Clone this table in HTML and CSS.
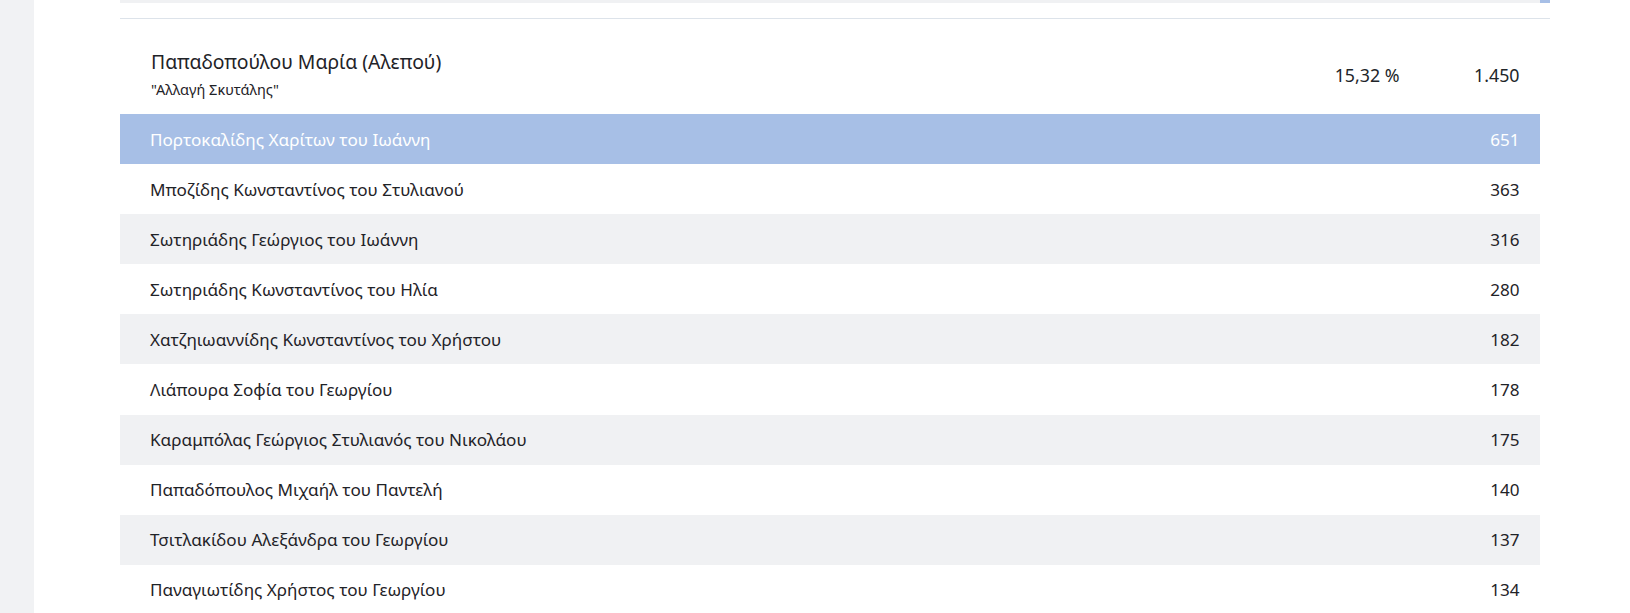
FILE: index.html
```html
<!DOCTYPE html>
<html lang="el">
<head>
<meta charset="utf-8">
<title>Αποτελέσματα</title>
<link rel="stylesheet" href="styles.css">
</head>
<body>
<div class="layout">
  <aside class="sidebar"></aside>
  <main class="main">
    <div class="content">
      <div class="prev-strip"><div class="prev-fill"></div><div class="prev-thumb"></div></div>
      <div class="divider"></div>
      <div class="party">
        <div class="party-head">
          <div class="party-info">
            <div class="party-name">Παπαδοπούλου Μαρία (Αλεπού)</div>
            <div class="party-sub">"Αλλαγή Σκυτάλης"</div>
          </div>
          <div class="party-pct">15,32 %</div>
          <div class="party-votes">1.450</div>
        </div>
        <div class="rows">
          <div class="row row-active"><span class="cand">Πορτοκαλίδης Χαρίτων του Ιωάννη</span><span class="votes">651</span></div>
          <div class="row"><span class="cand">Μποζίδης Κωνσταντίνος του Στυλιανού</span><span class="votes">363</span></div>
          <div class="row row-alt"><span class="cand">Σωτηριάδης Γεώργιος του Ιωάννη</span><span class="votes">316</span></div>
          <div class="row"><span class="cand">Σωτηριάδης Κωνσταντίνος του Ηλία</span><span class="votes">280</span></div>
          <div class="row row-alt"><span class="cand">Χατζηιωαννίδης Κωνσταντίνος του Χρήστου</span><span class="votes">182</span></div>
          <div class="row"><span class="cand">Λιάπουρα Σοφία του Γεωργίου</span><span class="votes">178</span></div>
          <div class="row row-alt"><span class="cand">Καραμπόλας Γεώργιος Στυλιανός του Νικολάου</span><span class="votes">175</span></div>
          <div class="row"><span class="cand">Παπαδόπουλος Μιχαήλ του Παντελή</span><span class="votes">140</span></div>
          <div class="row row-alt"><span class="cand">Τσιτλακίδου Αλεξάνδρα του Γεωργίου</span><span class="votes">137</span></div>
          <div class="row"><span class="cand">Παναγιωτίδης Χρήστος του Γεωργίου</span><span class="votes">134</span></div>
        </div>
      </div>
    </div>
  </main>
</div>
</body>
</html>
```
FILE: styles.css
```css
html, body {
  margin: 0;
  padding: 0;
  height: 100%;
  overflow: hidden;
  background: #ffffff;
  font-family: "Noto Sans", "Open Sans", sans-serif;
  color: #212529;
}

.layout {
  display: flex;
  height: 100%;
}

.sidebar {
  width: 34px;
  flex: none;
  background: #f1f2f4;
  box-shadow: 1px 0 3px rgba(0, 0, 0, 0.07);
}

.main {
  flex: 1;
  padding-left: 86px;
  background: #ffffff;
}

.content {
  width: 1430px;
  display: flex;
  flex-direction: column;
}

.prev-strip {
  display: flex;
  height: 3px;
}

.prev-fill {
  flex: 1;
  background: #f0f1f3;
}

.prev-thumb {
  width: 10px;
  background: #a7bfe6;
}

.divider {
  margin-top: 15px;
  height: 1px;
  background: #dde3ea;
}

.party {
  margin-right: 10px;
}

.party-head {
  display: flex;
  align-items: center;
  padding: 31px 20.5px 15px 31px;
}

.party-info {
  flex: 1;
  display: flex;
  flex-direction: column;
  gap: 5px;
}

.party-name {
  font-size: 19.4px;
  line-height: 24px;
  color: #1f2328;
}

.party-sub {
  font-size: 14.5px;
  line-height: 20px;
  color: #1f2328;
}

.party-pct {
  font-size: 17.8px;
  line-height: 24px;
  white-space: nowrap;
}

.party-votes {
  width: 120px;
  text-align: right;
  font-size: 17.8px;
  line-height: 24px;
}

.rows {
  display: flex;
  flex-direction: column;
}

.row {
  height: 50.1px;
  flex: none;
  display: flex;
  align-items: center;
  justify-content: space-between;
  padding: 0 20.5px 0 30px;
  font-size: 17.1px;
  color: #1f2328;
  background: #ffffff;
}

.row-alt {
  background: #f0f1f3;
}

.row-active {
  background: #a7bfe6;
  color: #ffffff;
}

.votes {
  text-align: right;
}
```
